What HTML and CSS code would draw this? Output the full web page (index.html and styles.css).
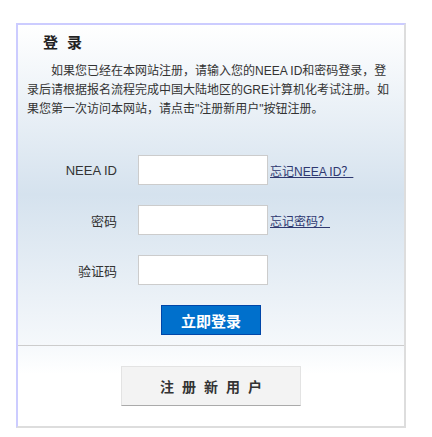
FILE: index.html
```html
<!DOCTYPE html>
<html lang="zh-CN">
<head>
<meta charset="utf-8">
<title>登录</title>
<link rel="stylesheet" href="styles.css">
</head>
<body>
<div class="box">
  <div class="top">
    <h2 class="title">登录</h2>
    <p class="intro">如果您已经在本网站注册，请输入您的NEEA ID和密码登录，登录后请根据报名流程完成中国大陆地区的GRE计算机化考试注册。如果您第一次访问本网站，请点击"注册新用户"按钮注册。</p>
    <form class="form">
      <div class="row">
        <label class="label">NEEA ID</label>
        <input class="input" type="text">
        <a class="link" href="#">忘记NEEA ID？</a>
      </div>
      <div class="row">
        <label class="label">密码</label>
        <input class="input" type="password">
        <a class="link" href="#">忘记密码？</a>
      </div>
      <div class="row">
        <label class="label">验证码</label>
        <input class="input" type="text">
      </div>
      <div class="actions">
        <button class="login" type="button">立即登录</button>
      </div>
    </form>
  </div>
  <div class="bottom">
    <button class="register" type="button">注册新用户</button>
  </div>
</div>
</body>
</html>
```

FILE: styles.css
```css
* { box-sizing: border-box; }
html, body { margin: 0; padding: 0; background: #fff; }
body {
  font-family: "Liberation Sans", "Noto Sans CJK SC", sans-serif;
  color: #333;
  padding: 23px 0 0 16px;
}
.box {
  width: 390px;
  height: 405px;
  border-top: 2px solid #ccccff;
  border-left: 2px solid #ccccff;
  border-right: 2px solid #dddddd;
  border-bottom: 2px solid #dddddd;
  display: flex;
  flex-direction: column;
}
.top {
  height: 321px;
  border-bottom: 1px solid #cccccc;
  background: linear-gradient(to bottom, #ffffff 0%, #d5e2ee 53%, #f5f8fb 100%);
  padding-top: 8px;
}
.title {
  margin: 0;
  padding-left: 25px;
  font-size: 15px;
  line-height: 20px;
  font-weight: bold;
  letter-spacing: 9px;
  color: #222;
}
.intro {
  margin: 9px 0 0 9px;
  width: 366px;
  font-size: 12px;
  line-height: 19px;
  text-indent: 24px;
  color: #333;
}
.form {
  margin-top: 36px;
  display: flex;
  flex-direction: column;
  gap: 20px;
}
.row {
  display: flex;
  align-items: center;
  height: 30px;
}
.label {
  width: 99px;
  text-align: right;
  font-size: 13px;
  color: #333;
  margin-right: 21px;
}
.input {
  width: 130px;
  height: 30px;
  border: 1px solid #cccccc;
  background: #fff;
  margin: 0;
  padding: 0 4px;
}
.link {
  margin-left: 2px;
  font-size: 12px;
  color: #2e3870;
  text-decoration: underline;
}
.actions {
  display: flex;
  justify-content: center;
}
.login {
  width: 100px;
  height: 30px;
  background: #0070cc;
  border: 1px solid #0046a8;
  color: #fff;
  font-family: inherit;
  font-size: 15px;
  font-weight: bold;
  padding: 0;
  margin: 0;
}
.bottom {
  flex: 1;
  background: linear-gradient(to bottom, #f6f9fc 0%, #ffffff 35%);
  display: flex;
  justify-content: center;
  padding-top: 20px;
}
.register {
  width: 180px;
  height: 40px;
  background: #f3f3f3;
  border: 1px solid #e3e3e3;
  border-bottom: 1px solid #aaaaaa;
  font-family: inherit;
  font-size: 14px;
  font-weight: bold;
  letter-spacing: 8px;
  text-indent: 8px;
  color: #333;
  padding: 0;
  margin: 0;
}
```
